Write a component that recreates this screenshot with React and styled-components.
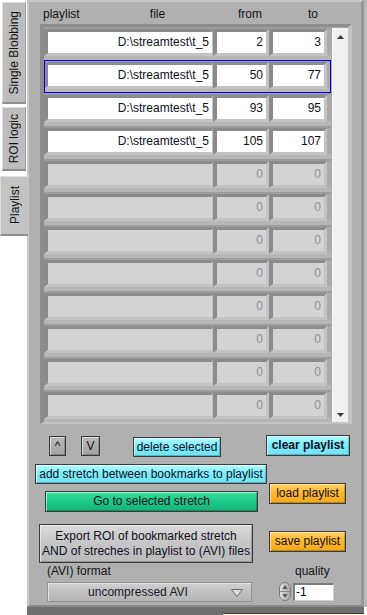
import styled, { createGlobalStyle } from "styled-components";

const GlobalStyle = createGlobalStyle`
  html, body {
    margin: 0;
    padding: 0;
    background: #ffffff;
  }
  body {
    font-family: "Liberation Sans", Arial, sans-serif;
    font-size: 12px;
    color: #141420;
  }
`;

const Screen = styled.div`
  display: flex;
  width: 367px;
  height: 615px;
  overflow: hidden;
`;

const TabStrip = styled.div`
  width: 27px;
  display: flex;
  flex-direction: column;
  padding-top: 2px;
  box-sizing: border-box;
`;

const Tab = styled.div`
  box-sizing: border-box;
  height: ${(p) => p.$h}px;
  width: ${(p) => (p.$active ? 28 : 24)}px;
  margin: ${(p) => (p.$active ? "2px -1px 0 0" : "0 0 3px 2px")};
  position: relative;
  z-index: 1;
  display: flex;
  align-items: center;
  justify-content: center;
  background: ${(p) => (p.$active ? "#c3c3c3" : "#bdbdbd")};
  border-left: 1px solid #dedede;
  border-top: 1px solid #dedede;
  border-bottom: 2px solid #8f8f8f;
  border-right: ${(p) => (p.$active ? "none" : "1px solid #9a9a9a")};
`;

const TabText = styled.span`
  writing-mode: vertical-rl;
  transform: rotate(180deg);
  white-space: nowrap;
  color: #151515;
`;

const Side = styled.div`
  display: flex;
  flex-direction: column;
  width: 340px;
`;

const Panel = styled.div`
  box-sizing: border-box;
  width: 337px;
  height: 607px;
  background: #b0b0b0;
  border-top: 2px solid #c8c8c8;
  border-left: 2px solid #c8c8c8;
  border-right: 3px solid #969696;
  border-bottom: 2px solid #8a8a8a;
  box-shadow: 3px 0 0 #b9b9b9;
  display: flex;
  flex-direction: column;
`;

const Footer = styled.div`
  flex: 1;
  display: flex;
  background: #707070;
  width: 337px;
`;

const TipEdge = styled.div`
  margin: 6px 0 0 196px;
  flex: 1;
  background: #ffffd0;
  border-top: 1px solid #3a3a3a;
`;

const Header = styled.div`
  display: flex;
  height: 22px;
  box-sizing: border-box;
  padding: 5px 0 0 14px;
  line-height: 14px;
`;

const HeadLabel = styled.span`
  width: ${(p) => p.$w}px;
  text-align: ${(p) => p.$align || "center"};
  white-space: nowrap;
  color: #141414;
`;

const ArrayFrame = styled.div`
  box-sizing: border-box;
  width: 312px;
  height: 400px;
  margin-left: 11px;
  display: flex;
  border-style: solid;
  border-width: 3px 4px 2px 4px;
  border-color: #8d8d8d #c4c4c4 #c4c4c4 #8d8d8d;
  background: #a7a7a7;
`;

const Rows = styled.div`
  width: 287px;
  height: 395px;
  overflow: hidden;
  display: flex;
  flex-direction: column;
`;

const Row = styled.div`
  box-sizing: border-box;
  flex: 0 0 33px;
  display: flex;
  padding-top: 2px;
  background: linear-gradient(#9c9c9c 0 2px, #ababab 2px 28px, #b6b6b6 28px);
  outline: ${(p) => (p.$selected ? "1px solid #0000ff" : "none")};
  outline-offset: -1px;
`;

const Cell = styled.div`
  box-sizing: border-box;
  width: ${(p) => p.$w}px;
  height: 27px;
  border-style: solid;
  border-width: 3px ${(p) => (p.$wide ? 1 : 3)}px 3px 4px;
  border-color: #8b8b8b #c3c3c3 #c3c3c3 #8b8b8b;
  background: ${(p) => (p.$off ? "#d3d3d3" : "#ffffff")};
  color: ${(p) => (p.$off ? "#8e8ea2" : "#10101c")};
  text-align: right;
  padding-right: 3px;
  line-height: 21px;
  white-space: nowrap;
  overflow: hidden;
`;

const Scrollbar = styled.div`
  box-sizing: border-box;
  width: 16px;
  margin: 1px 0 0 1px;
  height: 394px;
  background: #f0f0f0;
  border-left: 1px solid #fbfbfb;
  display: flex;
  flex-direction: column;
  justify-content: space-between;
  align-items: center;
  padding: 7px 0 5px;
`;

const ControlRow = styled.div`
  display: flex;
  align-items: flex-start;
  height: 22px;
  margin-top: 11px;
`;

const tones = {
  cyan: "linear-gradient(#b4fbff, #7deefc 45%, #6fe3f4)",
  green: "linear-gradient(#3ee0a0, #1dcb88 45%, #14b477)",
  orange: "linear-gradient(#ffd060, #ffb82c 45%, #f4a81a)",
  gray: "linear-gradient(#dadada, #c6c6c6 50%, #bababa)",
  dark: "linear-gradient(#b8b8b8, #a2a2a2)",
};

const Button = styled.div`
  box-sizing: border-box;
  flex: 0 0 auto;
  width: ${(p) => p.$w}px;
  height: ${(p) => p.$h || 20}px;
  margin: ${(p) => p.$m || "0"};
  display: flex;
  align-items: center;
  justify-content: center;
  text-align: center;
  border: 1px solid #3a3a3a;
  background: ${(p) => tones[p.$tone]};
  box-shadow: inset 1px 1px 0 rgba(255, 255, 255, 0.55),
    inset -1px -1px 0 rgba(0, 0, 0, 0.22);
  font-weight: ${(p) => (p.$bold ? 700 : 400)};
  line-height: 15px;
  color: #0e0e22;
  white-space: nowrap;
`;

const Lower = styled.div`
  display: grid;
  grid-template-columns: 240px 1fr;
  margin-top: 7px;
`;

const Column = styled.div`
  display: flex;
  flex-direction: column;
  align-items: flex-start;
`;

const FieldLabel = styled.div`
  line-height: 14px;
  margin: ${(p) => p.$m};
  color: #141414;
`;

const Ring = styled.div`
  box-sizing: border-box;
  width: 205px;
  height: 20px;
  margin: 4px 0 0 18px;
  display: flex;
  align-items: center;
  border: 1px solid #929292;
  background: linear-gradient(#d0d0d0, #c0c0c0 50%, #b6b6b6);
  box-shadow: inset 1px 1px 0 #e4e4e4;
`;

const RingText = styled.span`
  flex: 1;
  text-align: center;
  padding-left: 3px;
  color: #1a1a28;
`;

const RingArrow = styled.svg`
  width: 12px;
  height: 8px;
  margin: 2px 8px 0 6px;
`;

const Quality = styled.div`
  display: flex;
  align-items: center;
  margin: 4px 0 0 10px;
  height: 19px;
`;

const NumField = styled.div`
  box-sizing: border-box;
  width: 41px;
  height: 18px;
  margin-left: 2px;
  background: #ffffff;
  border-style: solid;
  border-width: 2px 1px 1px 2px;
  border-color: #7d7d7d #d0d0d0 #d0d0d0 #7d7d7d;
  line-height: 15px;
  padding-left: 1px;
  color: #000;
`;

const data = [
  { file: "D:\\streamtest\\t_5", from: 2, to: 3 },
  { file: "D:\\streamtest\\t_5", from: 50, to: 77, selected: true },
  { file: "D:\\streamtest\\t_5", from: 93, to: 95 },
  { file: "D:\\streamtest\\t_5", from: 105, to: 107 },
  ...Array.from({ length: 8 }, () => ({ file: "", from: 0, to: 0, off: true })),
];

const Spinner = () => (
  <svg width="12" height="19" viewBox="0 0 12 19">
    <defs>
      <linearGradient id="sp" x1="0" x2="1">
        <stop offset="0" stopColor="#e2e2e2" />
        <stop offset="1" stopColor="#a6a6a6" />
      </linearGradient>
    </defs>
    <rect x="0.5" y="0.5" width="11" height="18" rx="5.5" fill="url(#sp)" stroke="#7a7a7a" />
    <line x1="1" y1="9.5" x2="11" y2="9.5" stroke="#888" />
    <path d="M6 3 L8.5 7 L3.5 7 Z" fill="#555" />
    <path d="M6 16 L8.5 12 L3.5 12 Z" fill="#555" />
  </svg>
);

export default function App() {
  return (
    <>
      <GlobalStyle />
      <Screen>
        <TabStrip>
          <Tab $h={102}>
            <TabText>Single Blobbing</TabText>
          </Tab>
          <Tab $h={64}>
            <TabText>ROI logic</TabText>
          </Tab>
          <Tab $h={60} $active>
            <TabText>Playlist</TabText>
          </Tab>
        </TabStrip>

        <Side>
          <Panel>
            <Header>
              <HeadLabel $w={77} $align="left">playlist</HeadLabel>
              <HeadLabel $w={75}>file</HeadLabel>
              <HeadLabel $w={110}>from</HeadLabel>
              <HeadLabel $w={16}>to</HeadLabel>
            </Header>

            <ArrayFrame>
              <Rows>
                {data.map((r, i) => (
                  <Row key={i} $selected={r.selected}>
                    <Cell $w={169} $wide $off={r.off}>{r.file}</Cell>
                    <Cell $w={56} $off={r.off}>{r.from}</Cell>
                    <Cell $w={58} $off={r.off}>{r.to}</Cell>
                  </Row>
                ))}
              </Rows>
              <Scrollbar>
                <svg width="7" height="4" viewBox="0 0 7 4">
                  <path d="M3.5 0 L7 4 L0 4 Z" fill="#3a3a3a" />
                </svg>
                <svg width="7" height="4" viewBox="0 0 7 4">
                  <path d="M0 0 L7 0 L3.5 4 Z" fill="#3a3a3a" />
                </svg>
              </Scrollbar>
            </ArrayFrame>

            <ControlRow>
              <Button $tone="dark" $w={17} $h={20} $m="1px 0 0 20px">^</Button>
              <Button $tone="dark" $w={19} $h={20} $m="1px 0 0 15px">V</Button>
              <Button $tone="cyan" $w={88} $h={20} $m="2px 0 0 33px">delete selected</Button>
              <Button $tone="cyan" $w={84} $h={21} $m="0 0 0 45px" $bold>clear playlist</Button>
            </ControlRow>

            <Lower>
              <Column>
                <Button $tone="cyan" $w={232} $h={20} $m="0 0 0 6px">
                  add stretch between bookmarks to playlist
                </Button>
                <Button $tone="green" $w={213} $h={21} $m="7px 0 0 16px">
                  Go to selected stretch
                </Button>
                <Button $tone="gray" $w={214} $h={39} $m="12px 0 0 10px">
                  Export ROI of bookmarked stretch
                  <br />
                  AND of streches in playlist to (AVI) files
                </Button>
                <FieldLabel $m="1px 0 0 18px">(AVI) format</FieldLabel>
                <Ring>
                  <RingText>uncompressed AVI</RingText>
                  <RingArrow viewBox="0 0 12 8">
                    <path d="M0.5 0.5 L11.5 0.5 L6 7.5 Z" fill="#dcdcdc" stroke="#6c6c6c" />
                  </RingArrow>
                </Ring>
              </Column>
              <Column>
                <Button $tone="orange" $w={77} $h={21} $m="19px 0 0 0">load playlist</Button>
                <Button $tone="orange" $w={77} $h={21} $m="27px 0 0 0">save playlist</Button>
                <FieldLabel $m="12px 0 0 26px">quality</FieldLabel>
                <Quality>
                  <Spinner />
                  <NumField>-1</NumField>
                </Quality>
              </Column>
            </Lower>
          </Panel>
          <Footer>
            <TipEdge />
          </Footer>
        </Side>
      </Screen>
    </>
  );
}
